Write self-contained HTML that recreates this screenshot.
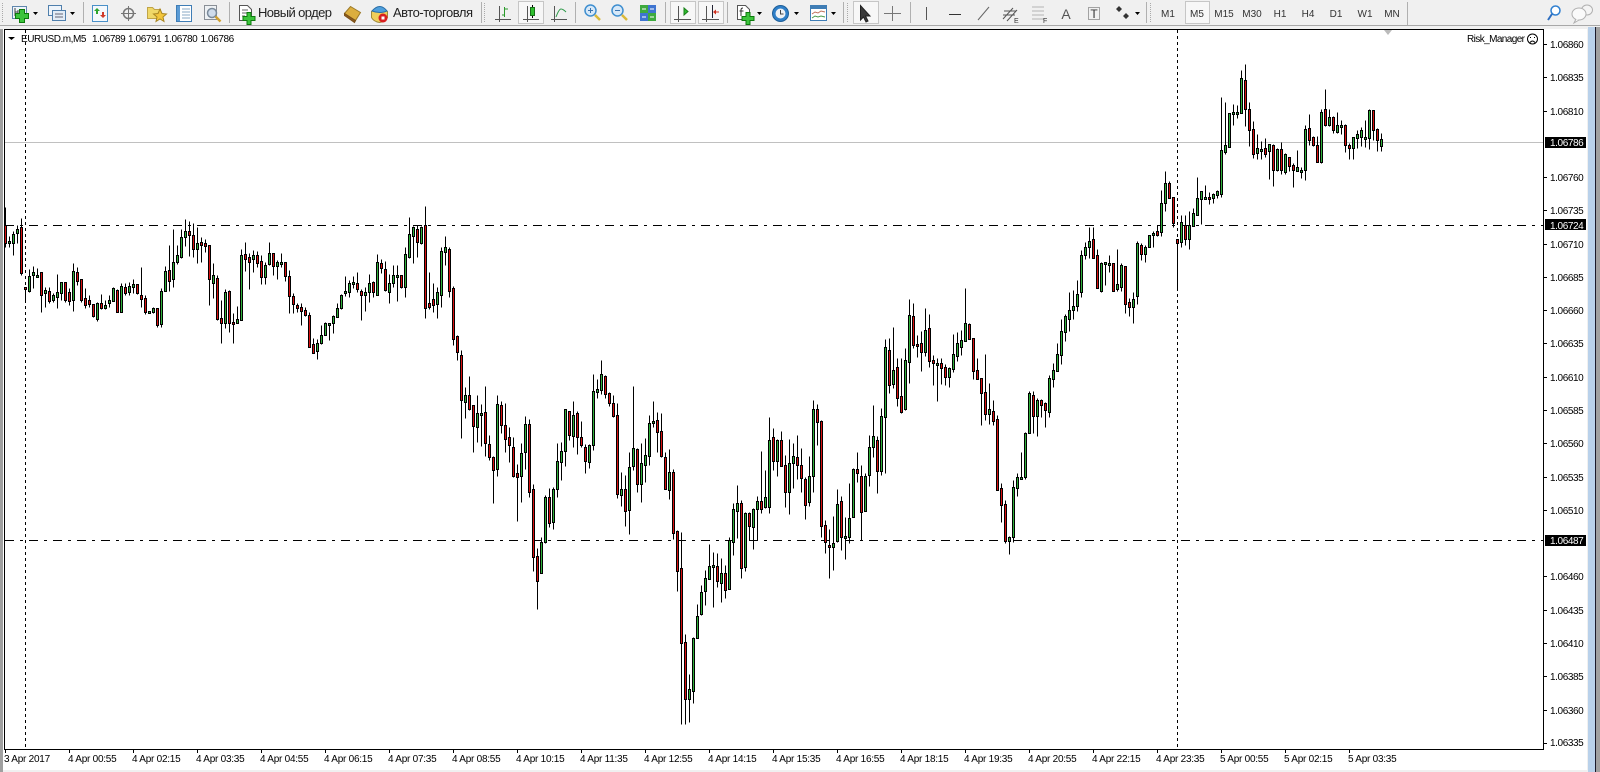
<!DOCTYPE html>
<html lang="ru"><head><meta charset="utf-8"><title>EURUSD.m,M5</title>
<style>
html,body{margin:0;padding:0;width:1600px;height:772px;overflow:hidden;background:#f0f0f0}
svg{display:block;font-family:"Liberation Sans",sans-serif}
.a{font-size:10px;letter-spacing:-.4px;fill:#000}
.t{font-size:10px;letter-spacing:-.25px;fill:#000}
.p{font-size:10px;fill:#333;text-anchor:middle}
.b{font-size:13px;fill:#222}
.ax{stroke:#555;fill:none}
.pl{fill:#3cc43c;stroke:#0c7a0c}
</style></head><body>
<svg xmlns="http://www.w3.org/2000/svg" width="1600" height="772" viewBox="0 0 1600 772">
<rect width="1600" height="772" fill="#f0f0f0"/>
<rect x="0" y="25" width="1600" height="1" fill="#a8a8a8"/>
<rect x="0" y="29" width="3" height="743" fill="#a0a0a0"/>
<rect x="3" y="29" width="1584" height="741" fill="#fff"/>
<rect x="1588" y="27" width="7" height="745" fill="#b9d1ea"/>
<rect x="1595" y="27" width="1" height="745" fill="#1a1a2a"/>
<rect x="1596" y="27" width="4" height="745" fill="#a0a0a0"/>

<!-- chart lines -->
<g fill="none" stroke="#000">
<path d="M5 142.5H1543" stroke="#c0c0c0"/>
<path d="M5 225.5H1543M5 540.5H1543" stroke-dasharray="9 6 3 6"/>
<path d="M25.5 30V749M1177.5 30V749" stroke-dasharray="3 3"/>
</g>
<!-- candles -->
<g transform="translate(.5 .5)" fill="none">
<path stroke="#000" d="M5 207V247M9 236V247M13 231V255M17 225V243M21 218V275M25 287V302M29 269V292M33 266V288M37 268V277M41 272V312M45 287V307M49 287V303M53 293V302M57 274V308M61 282V300M65 282V302M69 288V305M73 263V311M77 267V285M81 279V302M85 288V308M89 295V307M93 304V317M97 302V321M101 294V309M105 300V309M109 295V307M113 287V301M117 289V312M121 283V312M125 283V295M129 282V295M133 279V293M137 284V294M141 267V307M145 295V314M149 311V313M153 307V313M157 308V327M161 288V327M165 266V291M169 245V291M173 229V287M177 245V264M181 229V258M185 219V246M189 221V256M193 223V257M197 227V263M201 237V262M205 239V252M209 245V305M213 263V298M217 275V320M221 300V343M225 289V328M229 290V332M233 313V343M237 306V323M241 249V320M245 242V271M249 253V289M253 250V272M257 251V267M261 255V284M265 262V284M269 242V265M273 253V275M277 260V279M281 253V267M285 262V281M289 270V313M293 293V313M297 303V312M301 303V325M305 307V316M309 312V347M313 338V353M317 339V359M321 325V344M325 322V335M329 323V340M333 315V333M337 303V317M341 294V309M345 276V296M349 280V297M353 276V288M357 272V292M361 289V320M365 287V311M369 274V302M373 281V297M377 254V295M381 259V273M385 261V291M389 274V303M393 265V287M397 265V301M401 275V288M405 247V297M409 217V258M413 226V263M417 225V257M421 226V244M425 206V318M429 272V309M433 283V312M437 287V318M441 247V307M445 236V265M449 247V297M453 286V345M457 335V360M461 350V438M465 387V418M469 376V410M473 405V452M477 395V442M481 404V446M485 386V456M489 435V460M493 456V503M497 395V476M501 401V433M505 403V452M509 427V462M513 437V477M517 464V521M521 443V502M525 416V469M529 419V497M533 484V571M537 548V609M541 537V573M545 495V543M549 488V527M553 487V529M557 443V497M561 442V480M565 409V466M569 411V440M573 401V447M577 411V454M581 421V447M585 444V473M589 444V468M593 374V450M597 379V398M601 360V394M605 375V398M609 392V406M613 395V417M617 403V498M621 472V506M625 475V526M629 452V534M633 386V470M637 448V492M641 443V502M645 438V482M649 415V465M653 401V427M657 412V452M661 413V457M665 452V489M669 449V499M673 469V539M677 530V591M681 532V724M685 634V724M689 674V722M693 637V703M697 604V638M701 585V615M705 570V605M709 544V579M713 552V607M717 553V587M721 558V602M725 565V598M729 537V589M733 503V555M737 485V538M741 500V578M745 512V571M749 512V540M753 508V549M757 496V540M761 451V513M765 470V508M769 417V513M773 428V470M777 439V476M781 431V466M785 455V507M789 439V514M793 443V488M797 435V479M801 448V492M805 477V519M809 456V506M813 400V492M817 404V445M821 420V537M825 520V553M829 529V578M833 516V570M837 489V542M841 496V550M845 517V559M849 483V543M853 468V517M857 452V482M861 465V540M865 473V511M869 435V486M873 405V457M877 436V493M881 408V475M885 339V473M889 338V393M893 327V388M897 358V406M901 358V413M905 348V410M909 299V383M913 303V348M917 335V357M921 331V371M925 308V356M929 314V367M933 355V385M937 358V401M941 358V384M945 364V385M949 367V387M953 334V372M957 332V361M961 330V355M965 288V341M969 323V339M973 338V379M977 358V379M981 378V425M985 354V420M989 383V424M993 400V425M997 415V490M1001 483V522M1005 500V543M1009 536V554M1013 480V542M1017 473V496M1021 452V478M1025 432V479M1029 391V433M1033 391V433M1037 398V436M1041 399V417M1045 402V427M1049 375V417M1053 363V387M1057 343V371M1061 319V364M1065 314V341M1069 292V331M1073 290V319M1077 280V311M1081 250V297M1085 242V259M1089 227V258M1093 227V258M1097 249V288M1101 262V292M1105 262V285M1109 255V272M1113 263V291M1117 249V291M1121 263V291M1125 266V313M1129 298V316M1133 292V323M1137 241V304M1141 243V260M1145 245V262M1149 235V247M1153 231V247M1157 225V236M1161 190V236M1165 171V211M1169 181V198M1173 197V227M1177 239V290M1181 215V247M1185 215V245M1189 211V249M1193 208V226M1197 177V215M1201 191V224M1205 185V198M1209 192V204M1213 193V203M1217 190V198M1221 97V197M1225 102V154M1229 113V147M1233 104V125M1237 105V118M1241 70V113M1245 64V126M1249 102V146M1253 121V158M1257 134V159M1261 141V159M1265 138V157M1269 144V179M1273 144V186M1277 148V171M1281 142V174M1285 153V174M1289 157V171M1293 163V187M1297 150V171M1301 167V178M1305 125V180M1309 114V145M1313 136V146M1317 136V162M1321 109V163M1325 89V126M1329 109V126M1333 116V133M1337 112V133M1341 120V134M1345 124V152M1349 143V159M1353 137V159M1357 130V148M1361 127V146M1365 120V147M1369 109V149M1373 110V140M1377 128V151M1381 133V151"/>
<defs>
<path id="gr" d="M9 242V242M13 235V242M17 230V232M29 277V290M33 273V274M37 276V276M45 291V292M53 296V299M57 293V296M61 283V292M73 272V299M97 304V318M105 306V307M109 301V302M113 289V300M121 287V311M129 287V291M133 285V286M149 312V312M153 309V311M161 292V323M165 272V290M173 263V278M177 256V261M181 238V256M185 232V236M197 244V248M213 276V282M225 293V322M237 320V322M241 256V319M253 256V258M265 266V276M269 254V263M277 263V265M281 263V263M317 344V350M321 336V342M325 324V334M329 324V324M333 317V322M337 309V316M341 296V307M345 292V292M349 284V291M353 283V283M365 293V294M369 284V291M377 263V294M389 284V291M393 276V282M397 276V276M405 255V286M409 235V256M413 228V235M421 228V242M437 293V303M441 252V294M445 248V251M465 396V401M477 414V426M481 414V414M497 405V468M521 454V475M525 425V451M541 543V572M545 498V541M553 490V521M557 462V488M561 452V461M565 410V450M573 416V435M589 446V461M593 392V444M597 390V391M601 375V389M621 490V494M629 468V509M633 449V465M641 464V483M645 456V464M649 424V455M653 422V422M669 473V489M689 690V698M693 639V690M697 617V637M701 593V613M705 579V590M709 567V578M713 566V566M721 574V582M729 541V588M733 510V541M737 504V510M745 514V566M753 510V526M757 502V508M765 498V506M769 441V506M777 441V460M789 464V491M793 457V462M809 477V501M813 410V475M833 544V546M837 505V540M845 537V537M849 519V536M853 470V516M865 477V510M869 448V474M873 437V446M881 417V470M885 348V416M893 371V383M905 361V408M909 316V361M925 331V351M937 364V364M949 369V376M953 355V368M957 344V355M961 341V346M965 324V340M989 410V413M1009 538V540M1013 488V536M1017 478V487M1021 478V478M1025 434V476M1029 394V432M1037 401V415M1049 379V411M1053 371V378M1057 355V370M1061 332V354M1065 317V331M1069 311V318M1073 307V309M1077 295V305M1081 256V291M1085 248V254M1089 242V246M1101 264V290M1105 263V263M1109 264V264M1117 285V288M1121 266V286M1133 300V306M1137 244V295M1145 248V253M1149 236V246M1153 234V234M1161 204V231M1165 184V202M1181 223V241M1189 226V238M1193 214V225M1197 199V214M1201 192V198M1205 198V198M1213 195V197M1217 192V194M1221 151V193M1225 146V151M1229 114V146M1233 113V113M1237 113V113M1241 79V112M1257 149V152M1261 150V150M1269 145V150M1277 150V169M1285 155V171M1297 168V170M1301 171V171M1305 130V169M1321 113V161M1329 118V124M1337 126V131M1341 126V126M1353 138V147M1357 135V137M1361 131V136M1365 138V138M1369 111V137M1381 140V145"/>
<path id="rd" d="M5 226V242M21 228V272M25 288V288M41 273V294M49 292V300M65 283V299M69 293V300M77 273V280M81 280V299M85 299V304M89 301V303M93 305V315M101 304V307M117 291V311M125 288V292M137 285V292M141 296V298M145 299V311M157 309V324M169 271V280M189 232V234M193 236V248M201 243V244M205 244V245M209 246V278M217 279V318M221 319V322M229 292V322M233 323V323M245 255V258M249 258V261M257 256V262M261 262V276M273 254V265M285 263V275M289 277V295M293 297V303M297 306V307M301 308V310M305 311V314M309 316V346M313 345V352M357 284V288M361 292V294M373 283V291M381 264V267M385 270V289M401 276V286M417 230V241M425 226V307M429 304V306M433 300V304M449 250V290M453 289V338M457 337V351M461 356V399M469 396V408M473 406V425M485 413V442M489 445V456M493 458V469M501 406V424M505 426V438M509 438V444M513 448V475M517 474V476M529 425V491M533 490V556M537 557V580M549 498V522M569 412V434M577 414V436M581 438V444M585 448V460M605 377V393M609 394V402M613 404V415M617 416V493M625 490V510M637 450V483M657 421V431M661 432V455M665 458V488M673 473V532M677 532V570M681 569V642M685 643V698M717 567V580M725 574V589M741 504V567M749 514V525M761 502V508M773 438V460M781 441V465M785 466V491M797 458V464M801 466V477M805 480V504M817 410V421M821 422V525M825 526V541M829 546V546M841 502V536M857 470V472M861 477V511M877 441V470M889 351V384M897 368V397M901 397V411M913 317V344M917 345V345M921 344V351M929 329V360M933 361V362M941 364V367M945 368V376M969 325V338M973 339V370M977 371V378M981 379V392M985 393V413M993 412V420M997 420V489M1001 489V504M1005 505V540M1033 396V415M1041 401V404M1045 404V409M1093 240V257M1097 256V287M1113 264V290M1125 267V303M1129 303V306M1141 246V253M1157 232V234M1169 184V197M1173 198V222M1177 240V242M1185 226V238M1209 198V198M1245 81V108M1249 110V129M1253 130V153M1265 149V153M1273 146V169M1281 150V169M1289 158V165M1293 166V169M1309 129V139M1313 138V144M1317 146V161M1325 110V124M1333 118V129M1345 126V144M1349 146V147M1373 111V129M1377 130V139"/>
</defs>
<use href="#gr" stroke="#000" stroke-width="3" stroke-linecap="square"/>
<use href="#rd" stroke="#000" stroke-width="3" stroke-linecap="square"/>
<use href="#gr" stroke="#2fb03a" stroke-width="1" stroke-linecap="square"/>
<use href="#rd" stroke="#d81010" stroke-width="1" stroke-linecap="square"/>
</g>

<!-- frame -->
<rect x="4" y="29" width="1540" height="1" fill="#000"/>
<rect x="4" y="29" width="1" height="721" fill="#000"/>
<rect x="1543" y="29" width="1" height="721" fill="#000"/>
<rect x="4" y="749" width="1540" height="1" fill="#000"/>
<path d="M5.5 750v3M69.5 750v3M133.5 750v3M197.5 750v3M261.5 750v3M325.5 750v3M389.5 750v3M453.5 750v3M517.5 750v3M581.5 750v3M645.5 750v3M709.5 750v3M773.5 750v3M837.5 750v3M901.5 750v3M965.5 750v3M1029.5 750v3M1093.5 750v3M1157.5 750v3M1221.5 750v3M1285.5 750v3M1349.5 750v3" stroke="#000"/>
<path d="M1544 44.5h3M1544 77.5h3M1544 111.5h3M1544 177.5h3M1544 210.5h3M1544 244.5h3M1544 277.5h3M1544 310.5h3M1544 343.5h3M1544 377.5h3M1544 410.5h3M1544 443.5h3M1544 477.5h3M1544 510.5h3M1544 576.5h3M1544 610.5h3M1544 643.5h3M1544 676.5h3M1544 710.5h3M1544 743.5h3" stroke="#000"/>

<!-- header text -->
<path d="M8 37h7l-3.500 3z" fill="#000"/>
<text class="a" x="21" y="42" textLength="65">EURUSD.m,M5</text>
<text class="a" x="92" y="42">1.06789</text>
<text class="a" x="128" y="42">1.06791</text>
<text class="a" x="164" y="42">1.06780</text>
<text class="a" x="200.500" y="42">1.06786</text>
<text class="a" x="1467" y="42" textLength="58" style="letter-spacing:0">Risk_Manager</text>
<circle cx="1532.500" cy="39" r="5" fill="none" stroke="#000"/>
<path d="M1530 37.500h1M1534 37.500h1M1530 42.500q2.500-3 5 0" stroke="#000" fill="none"/>
<path d="M1384 30h8l-4 5z" fill="#bbb"/>

<!-- price axis -->
<text class="a" x="1550" y="48">1.06860</text>
<text class="a" x="1550" y="81">1.06835</text>
<text class="a" x="1550" y="115">1.06810</text>
<rect x="1545" y="137" width="41" height="11" fill="#000"/>
<text class="a" x="1550" y="146" style="fill:#fff">1.06786</text>
<text class="a" x="1550" y="181">1.06760</text>
<text class="a" x="1550" y="214">1.06735</text>
<rect x="1545" y="219" width="41" height="11" fill="#000"/>
<text class="a" x="1550" y="229" style="fill:#fff">1.06724</text>
<text class="a" x="1550" y="248">1.06710</text>
<text class="a" x="1550" y="281">1.06685</text>
<text class="a" x="1550" y="314">1.06660</text>
<text class="a" x="1550" y="347">1.06635</text>
<text class="a" x="1550" y="381">1.06610</text>
<text class="a" x="1550" y="414">1.06585</text>
<text class="a" x="1550" y="447">1.06560</text>
<text class="a" x="1550" y="481">1.06535</text>
<text class="a" x="1550" y="514">1.06510</text>
<rect x="1545" y="535" width="41" height="11" fill="#000"/>
<text class="a" x="1550" y="544" style="fill:#fff">1.06487</text>
<text class="a" x="1550" y="580">1.06460</text>
<text class="a" x="1550" y="614">1.06435</text>
<text class="a" x="1550" y="647">1.06410</text>
<text class="a" x="1550" y="680">1.06385</text>
<text class="a" x="1550" y="714">1.06360</text>
<text class="a" x="1550" y="746">1.06335</text>

<!-- time axis -->
<text class="t" x="4" y="762">3 Apr 2017</text>
<text class="t" x="68" y="762">4 Apr 00:55</text>
<text class="t" x="132" y="762">4 Apr 02:15</text>
<text class="t" x="196" y="762">4 Apr 03:35</text>
<text class="t" x="260" y="762">4 Apr 04:55</text>
<text class="t" x="324" y="762">4 Apr 06:15</text>
<text class="t" x="388" y="762">4 Apr 07:35</text>
<text class="t" x="452" y="762">4 Apr 08:55</text>
<text class="t" x="516" y="762">4 Apr 10:15</text>
<text class="t" x="580" y="762">4 Apr 11:35</text>
<text class="t" x="644" y="762">4 Apr 12:55</text>
<text class="t" x="708" y="762">4 Apr 14:15</text>
<text class="t" x="772" y="762">4 Apr 15:35</text>
<text class="t" x="836" y="762">4 Apr 16:55</text>
<text class="t" x="900" y="762">4 Apr 18:15</text>
<text class="t" x="964" y="762">4 Apr 19:35</text>
<text class="t" x="1028" y="762">4 Apr 20:55</text>
<text class="t" x="1092" y="762">4 Apr 22:15</text>
<text class="t" x="1156" y="762">4 Apr 23:35</text>
<text class="t" x="1220" y="762">5 Apr 00:55</text>
<text class="t" x="1284" y="762">5 Apr 02:15</text>
<text class="t" x="1348" y="762">5 Apr 03:35</text>

<!-- TOOLBAR -->
<g stroke="#aaa" stroke-dasharray="1 1" fill="none">
<path d="M2.500 3V22M484.500 3V22M847.500 3V22M1150.500 3V22"/>
</g>
<g stroke="#b0b0b0"><path d="M83.500 2V23M229.500 2V23M481.500 2V23M575.500 2V23M665.500 2V23M727.500 2V23M843.500 2V23M910.500 2V23M1146.500 2V23M1407.500 2V25"/></g>
<g fill="#000"><path d="M33 12h5l-2.500 3zM70 12h5l-2.500 3zM757 12h5l-2.500 3zM794 12h5l-2.500 3zM831 12h5l-2.500 3zM1135 12h5l-2.500 3z"/></g>
<!-- selected buttons -->
<g fill="#f7f7f7" stroke="#c6c6c6">
<rect x="518.500" y="1.500" width="25" height="22"/>
<rect x="670.500" y="1.500" width="25" height="22"/>
<rect x="698.500" y="1.500" width="25" height="22"/>
<rect x="853.500" y="1.500" width="25" height="22"/>
<rect x="1185.500" y="1.500" width="24" height="22"/>
</g>
<!-- new chart -->
<rect x="12.500" y="6.500" width="14" height="12" fill="#eef4fa" stroke="#5f86ac"/>
<path d="M15 8v8M18 10v4M15 12h3" stroke="#444" fill="none"/>
<path class="pl" d="M19.500 9.500h5v4h4v5h-4v4h-5v-4h-4v-5h4z"/>
<!-- profiles -->
<rect x="48.500" y="5.500" width="13" height="10" fill="#eef4fa" stroke="#4f7fac"/>
<rect x="52.500" y="10.500" width="13" height="10" fill="#e2ecf6" stroke="#4f7fac"/>
<path d="M55 14h8M55 17h8" stroke="#667"/>
<!-- market watch -->
<rect x="92.500" y="5.500" width="15" height="16" fill="#f4f8fc" stroke="#4a90c8"/>
<path d="M97 8l3 3h-2v3h-2v-3h-2z" fill="#2ea52e"/>
<path d="M103 18l-3-3h2v-3h2v3h2z" fill="#d03a2a"/>
<!-- crosshair -->
<circle cx="128.500" cy="13.500" r="5" fill="none" stroke="#777" stroke-width="1.500"/>
<path d="M128.500 6v15M121 13.500h15" stroke="#777"/>
<!-- favourites -->
<path d="M147.500 7.500h5l2 2h6v9h-13z" fill="#f0d868" stroke="#c0a448"/>
<path d="M160 9l2 4.500 4.500.5-3.500 3 1 4.500-4-2.500-4 2.500 1-4.500-3.500-3 4.500-.5z" fill="#f3c63c" stroke="#a88522"/>
<!-- terminal -->
<rect x="176.500" y="5.500" width="15" height="16" fill="#fff" stroke="#3f7db5"/>
<rect x="177" y="6" width="3" height="15" fill="#5b9bd5"/>
<path d="M182 9h8M182 12h8M182 15h8M182 18h8" stroke="#8aa8c4"/>
<!-- tester -->
<rect x="204.500" y="5.500" width="12" height="14" fill="#eef1f4" stroke="#8a8f96"/>
<circle cx="212" cy="13" r="4.500" fill="#cfdcec" stroke="#7a8a9a" stroke-width="1.500"/>
<path d="M215.500 16.500l5 5" stroke="#d0a030" stroke-width="2.500"/>
<!-- new order -->
<path d="M239.500 5.500h8l4 4v11h-12z" fill="#fff" stroke="#555"/>
<path d="M242 10h6M242 13h6M242 16h3" stroke="#666"/>
<path class="pl" d="M247 12.500h4v4h4v4h-4v4h-4v-4h-4v-4h4z"/>
<text class="b" x="258" y="17" textLength="74">Новый ордер</text>
<!-- book -->
<path d="M344.500 13.500l6-7 10 6-5 8z" fill="#dcae3e" stroke="#9c7a28"/>
<path d="M344.500 13.500v2l10 7 1-2z" fill="#8c5a1e" stroke="#7a5018"/>
<!-- autotrade -->
<path d="M371.500 11.500q8-8 16 0v6q-2 4-8 5-6-1-8-5z" fill="#f0cf5a" stroke="#a08a3a"/>
<path d="M372 11q8-9 15 0q-7 3-15 0z" fill="#4f9fdc" stroke="#2a6fa8"/>
<circle cx="383" cy="18" r="4.500" fill="#d82020"/>
<rect x="381.500" y="16.500" width="3" height="3" fill="#fff"/>
<text class="b" x="393" y="17" textLength="80">Авто-торговля</text>
<!-- bar chart -->
<path class="ax" d="M499.500 6V22M495 19.500H511"/>
<path d="M504.500 7v10M502 15h2M505 9h3" stroke="#2a9a2a" fill="none"/>
<!-- candle chart -->
<path class="ax" d="M527.500 6V22M523 19.500H539"/>
<path d="M532.500 5V18" stroke="#000"/>
<rect x="530.500" y="7.500" width="4" height="8" fill="#2fbf2f" stroke="#1a6f1a"/>
<!-- line chart -->
<path class="ax" d="M554.500 6V22M551 19.500H567"/>
<path d="M556 17q3-8 5-8t5 3" fill="none" stroke="#2f9a4a"/>
<!-- zoom in / out -->
<circle cx="590.500" cy="10.500" r="5.500" fill="#d6e8f8" stroke="#3f8fd0" stroke-width="1.500"/>
<path d="M588 10.500h5M590.500 8v5" stroke="#3a74b0"/>
<path d="M595 15l5 5" stroke="#d9b93a" stroke-width="2.500"/>
<circle cx="617.500" cy="10.500" r="5.500" fill="#d6e8f8" stroke="#3f8fd0" stroke-width="1.500"/>
<path d="M615 10.500h5" stroke="#3a74b0"/>
<path d="M622 15l5 5" stroke="#d9b93a" stroke-width="2.500"/>
<!-- tile -->
<rect x="640" y="5" width="8" height="8" fill="#3faa3f"/><rect x="648" y="5" width="8" height="8" fill="#3f74d0"/>
<rect x="640" y="13" width="8" height="8" fill="#3f74d0"/><rect x="648" y="13" width="8" height="8" fill="#3faa3f"/>
<path d="M642 9h4M650 9h4M642 17h4M650 17h4" stroke="#fff"/>
<!-- shift / autoscroll -->
<path class="ax" d="M678.500 6V22M674 19.500H691"/><path d="M684 8v7l4-3.500z" fill="#2fbf2f" stroke="#1a7f1a"/>
<path class="ax" d="M706.500 6V22M702 19.500H719"/><path d="M712.500 5V18" stroke="#223"/><path d="M719 11.500h-3v-2l-3 2.500 3 2.500v-2h3z" fill="#d0301f"/>
<!-- indicators -->
<path d="M737.500 5.500h8l4 4v10h-12z" fill="#fff" stroke="#555"/>
<path d="M743 8q-2 0-2 2v6M739.500 11h4" stroke="#333" fill="none"/>
<path class="pl" d="M746 12.500h4v4h4v4h-4v4h-4v-4h-4v-4h4z"/>
<!-- clock -->
<circle cx="780.500" cy="13.500" r="8" fill="#2f7fc8" stroke="#1f5f98"/>
<circle cx="780.500" cy="13.500" r="5" fill="#eef1f4"/>
<path d="M780.500 10v4h3" stroke="#444" fill="none"/>
<!-- templates -->
<rect x="810.500" y="5.500" width="16" height="15" fill="#fff" stroke="#3f7db5"/>
<rect x="811" y="6" width="15" height="3" fill="#3f7db5"/>
<path d="M812 14l3-2 3 1 3-2 4 1" stroke="#c0705a" fill="none"/>
<path d="M812 18l3-2 3 1 3-1 4 1" stroke="#4a9a4a" fill="none"/>
<!-- cursor -->
<path d="M860.500 5.500V20l3-3 2.500 5 2-1-2.500-5h4.500z" fill="#3a3a3a" stroke="#222"/>
<!-- crosshair tool -->
<path d="M892.500 6V21M884 13.500h17" stroke="#777"/>
<!-- line tools -->
<path d="M926.500 7V20" stroke="#555"/>
<path d="M949 14.500h12" stroke="#333"/>
<path d="M978 20l11-13" stroke="#666"/>
<path d="M1003 19l10-11M1007 21l10-11M1004 11l12 0M1003 15l12 0" stroke="#555" fill="none"/>
<text x="1014" y="23" font-size="7" fill="#333">E</text>
<path d="M1032.500 7h12M1032.500 11h12M1032.500 15h12M1032.500 19h12" stroke="#777" stroke-dasharray="1 1"/>
<text x="1043" y="23" font-size="7" fill="#333">F</text>
<text x="1066" y="19" font-size="14" text-anchor="middle" fill="#555">A</text>
<rect x="1088.500" y="7.500" width="11" height="12" fill="none" stroke="#555" stroke-dasharray="1 1"/>
<text x="1094" y="18" font-size="12" text-anchor="middle" fill="#333">T</text>
<path d="M1119 6l3 3-3 3-3-3zM1126 13l3 3-3 3-3-3z" fill="#333"/>
<!-- periods -->
<text class="p" x="1168" y="17">M1</text>
<text class="p" x="1197" y="17">M5</text>
<text class="p" x="1224" y="17">M15</text>
<text class="p" x="1252" y="17">M30</text>
<text class="p" x="1280" y="17">H1</text>
<text class="p" x="1308" y="17">H4</text>
<text class="p" x="1336" y="17">D1</text>
<text class="p" x="1365" y="17">W1</text>
<text class="p" x="1392" y="17">MN</text>
<!-- search + chat -->
<circle cx="1555.500" cy="10.500" r="4.500" fill="#fff" stroke="#2f7fd0" stroke-width="1.500"/>
<path d="M1552 14l-4 6" stroke="#2f6fc0" stroke-width="2"/>
<ellipse cx="1587" cy="10" rx="5.500" ry="5" fill="#f4f4f4" stroke="#b0b0b0"/>
<ellipse cx="1579" cy="14" rx="7" ry="6" fill="#fafafa" stroke="#b0b0b0"/>
<path d="M1576 19l-2 4 5-3" fill="#fafafa" stroke="#b0b0b0"/>
</svg>
</body></html>
